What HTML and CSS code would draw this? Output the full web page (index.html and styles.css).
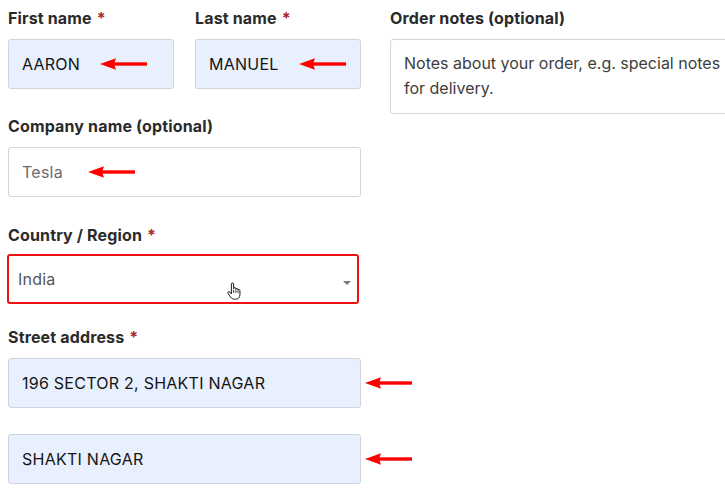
FILE: index.html
```html
<!DOCTYPE html>
<html lang="en">
<head>
<meta charset="utf-8">
<title>Billing details</title>
<link rel="stylesheet" href="styles.css">
</head>
<body>
<div class="form">
  <div class="col">
    <div class="row-2">
      <div class="field">
        <div class="label">First name <span class="req">*</span></div>
        <div class="input autofill">AARON
          <svg class="arrow arrow-first" width="47" height="12" viewBox="0 0 47 12"><polygon points="0,6 16,0.3 14,6 16,11.7" fill="#f00"/><rect x="14" y="4.3" width="33" height="3.4" fill="#f00"/></svg>
        </div>
      </div>
      <div class="field">
        <div class="label">Last name <span class="req">*</span></div>
        <div class="input autofill">MANUEL
          <svg class="arrow arrow-last" width="47" height="12" viewBox="0 0 47 12"><polygon points="0,6 16,0.3 14,6 16,11.7" fill="#f00"/><rect x="14" y="4.3" width="33" height="3.4" fill="#f00"/></svg>
        </div>
      </div>
    </div>
    <div class="field">
      <div class="label">Company name (optional)</div>
      <div class="input plain">Tesla
        <svg class="arrow arrow-company" width="47" height="12" viewBox="0 0 47 12"><polygon points="0,6 16,0.3 14,6 16,11.7" fill="#f00"/><rect x="14" y="4.3" width="33" height="3.4" fill="#f00"/></svg>
      </div>
    </div>
    <div class="field field-select">
      <div class="label">Country / Region <span class="req">*</span></div>
      <div class="select">India
        <span class="caret"></span>
        <svg class="cursor" width="14" height="19" viewBox="0 0 16 20"><path d="M5 1.5C5 .7 5.6.2 6.3.2S7.6.7 7.6 1.5V6.8C7.6 6.1 8.2 5.6 8.9 5.6S10.2 6.1 10.2 6.8V7.6C10.2 6.9 10.8 6.5 11.4 6.5S12.6 7 12.6 7.7V8.6C12.6 8 13.1 7.6 13.7 7.6S14.8 8 14.8 8.7V13.5C14.8 16.5 13 18.8 10 18.8H8.5C6.5 18.8 5.3 18 4.2 16.5L1.2 12.3C.7 11.6.8 10.8 1.4 10.4S2.8 10.2 3.3 10.8L5 12.8Z" fill="#fff" stroke="#111" stroke-width="1.1" stroke-linejoin="round"/><path d="M7.6 8V11.5M10.2 8.5V11.5M12.6 9V11.5" stroke="#111" stroke-width="1" fill="none"/></svg>
      </div>
    </div>
    <div class="field">
      <div class="label">Street address <span class="req">*</span></div>
      <div class="input autofill">196 SECTOR 2, SHAKTI NAGAR
        <svg class="arrow arrow-out" width="47" height="12" viewBox="0 0 47 12"><polygon points="0,6 16,0.3 14,6 16,11.7" fill="#f00"/><rect x="14" y="4.3" width="33" height="3.4" fill="#f00"/></svg>
      </div>
    </div>
    <div class="field">
      <div class="input autofill">SHAKTI NAGAR
        <svg class="arrow arrow-out" width="47" height="12" viewBox="0 0 47 12"><polygon points="0,6 16,0.3 14,6 16,11.7" fill="#f00"/><rect x="14" y="4.3" width="33" height="3.4" fill="#f00"/></svg>
      </div>
    </div>
  </div>
  <div class="col">
    <div class="field">
      <div class="label">Order notes (optional)</div>
      <div class="textarea">Notes about your order, e.g. special notes for delivery.</div>
    </div>
  </div>
</div>
</body>
</html>
```
FILE: styles.css
```css
html, body {
  margin: 0;
  padding: 0;
  background: #fff;
  overflow: hidden;
}
body {
  font-family: "Inter", "Liberation Sans", sans-serif;
  color: #222;
  width: 725px;
  height: 495px;
}
.form {
  display: grid;
  grid-template-columns: 353px 353px;
  column-gap: 29px;
  padding: 5.5px 0 0 8px;
  align-items: start;
}
.row-2 {
  display: grid;
  grid-template-columns: 166px 166px;
  column-gap: 21px;
}
.field {
  display: flex;
  flex-direction: column;
  margin-bottom: 25.5px;
}
.label {
  font-size: 16px;
  font-weight: 700;
  line-height: 24px;
  color: #2a2a2a;
  margin-bottom: 9px;
  letter-spacing: 0.15px;
}
.req {
  color: #a8262a;
  margin-left: 1px;
}
.input {
  position: relative;
  box-sizing: border-box;
  height: 50px;
  border: 1px solid #cfd3dc;
  border-radius: 3px;
  padding: 0 13px;
  display: flex;
  align-items: center;
  font-size: 16px;
  letter-spacing: 0.25px;
  color: #151515;
}
.autofill {
  background: #e8f0fe;
}
.plain {
  background: #fff;
  color: #6b6b6b;
  border-color: #d4d4d4;
}
.field-select {
  margin-bottom: 21.5px;
}
.field-select .label {
  margin-bottom: 7px;
}
.select {
  position: relative;
  box-sizing: border-box;
  height: 50px;
  width: 352px;
  margin-left: -1px;
  border: 2px solid #ee1111;
  border-radius: 3px;
  padding: 0 9px;
  display: flex;
  align-items: center;
  font-size: 16px;
  letter-spacing: 0.2px;
  color: #555;
}
.caret {
  position: absolute;
  right: 6px;
  top: 25px;
  width: 0;
  height: 0;
  border-left: 4px solid transparent;
  border-right: 4px solid transparent;
  border-top: 4px solid #7a7a7a;
}
.cursor {
  position: absolute;
  left: 218px;
  top: 26px;
}
.arrow {
  position: absolute;
  top: 50%;
  transform: translateY(-50%);
}
.arrow-first { left: 91px; }
.arrow-last { left: 103px; }
.arrow-company { left: 79px; }
.arrow-out { left: calc(100% + 5px); }
.textarea {
  box-sizing: border-box;
  height: 75px;
  border: 1px solid #d4d4d4;
  border-radius: 3px;
  padding: 11px 13px;
  font-size: 16px;
  line-height: 25px;
  color: #3d3d3d;
}
```
